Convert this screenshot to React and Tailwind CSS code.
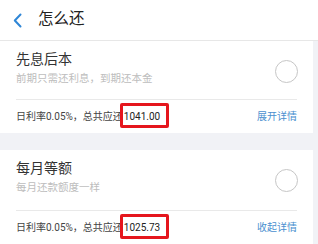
import React from "react";

const plans = [
  {
    title: "先息后本",
    desc: "前期只需还利息，到期还本金",
    total: "1041.00",
    action: "展开详情",
    top: "h-[58px]",
  },
  {
    title: "每月等额",
    desc: "每月还款额度一样",
    total: "1025.73",
    action: "收起详情",
    top: "h-[60px]",
  },
];

function PlanCard({ plan }) {
  return (
    <div className="bg-white mr-[5px]">
      {/* title + radio */}
      <div className={`${plan.top} flex items-start justify-between pl-4`}>
        <div className="pt-[8px]">
          <div className="text-[14px] leading-[20px] text-[#333]">{plan.title}</div>
          <div className="mt-[3px] text-[10.5px] leading-[14px] text-[#bdbdbd]">{plan.desc}</div>
        </div>
        <div className="mt-[19px] mr-[15px] w-[23px] h-[23px] rounded-full border-[1.5px] border-[#c6c6c6]" />
      </div>
      <div className="mx-4 border-t border-[#e9e9e9]" />
      {/* summary row */}
      <div className="h-[33px] flex items-center justify-between px-4 text-[10px] leading-[14px]">
        <div className="text-[#444] flex items-center">
          <span>日利率0.05%，总共应还</span>
          <span className="relative ml-[1px] text-[#222]">
            {plan.total}
            <span className="absolute -left-[4px] -right-[9px] -top-[7px] -bottom-[4px] border-[3px] border-[#e5161d] rounded-[2px]" />
          </span>
        </div>
        <span className="text-[#4a8fcf]">{plan.action}</span>
      </div>
    </div>
  );
}

export default function App() {
  return (
    <div
      className="w-[318px] h-[244px] overflow-hidden bg-[#f1f2f6]"
      style={{ fontFamily: 'Roboto, "Noto Sans CJK SC", sans-serif' }}
    >
      {/* Header */}
      <header className="h-[41px] bg-white border-b border-[#e7e7e7] flex items-center">
        <svg className="ml-[13px]" width="9" height="15" viewBox="0 0 9 15" fill="none">
          <polyline points="7.5,1.5 1.8,7.5 7.5,13.5" stroke="#2f86d6" strokeWidth="2" strokeLinecap="round" strokeLinejoin="round" />
        </svg>
        <h1 className="ml-[16px] text-[15.5px] text-[#222] font-normal">怎么还</h1>
      </header>

      <PlanCard plan={plans[0]} />
      <div className="h-[17px]" />
      <PlanCard plan={plans[1]} />
    </div>
  );
}
